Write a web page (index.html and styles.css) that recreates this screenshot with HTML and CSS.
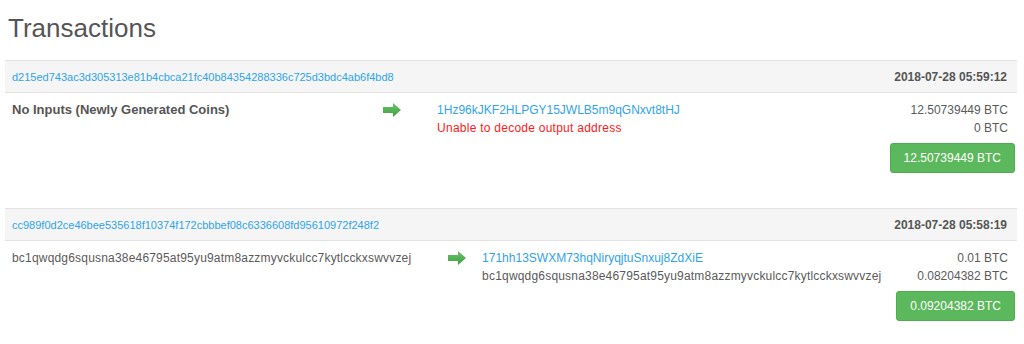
FILE: index.html
```html
<!DOCTYPE html>
<html>
<head>
<meta charset="utf-8">
<link rel="stylesheet" href="styles.css">
</head>
<body>
<div class="page">
  <h1 class="title">Transactions</h1>

  <div class="tx">
    <div class="tx-head">
      <a class="hash" href="#">d215ed743ac3d305313e81b4cbca21fc40b84354288336c725d3bdc4ab6f4bd8</a>
      <span class="time">2018-07-28 05:59:12</span>
    </div>
    <table class="tx-body">
      <tr>
        <td class="ins"><span class="coinbase">No Inputs (Newly Generated Coins)</span></td>
        <td class="arrow"><svg width="18" height="14" viewBox="0 0 18 14"><defs><linearGradient id="g1" x1="0" y1="0" x2="0" y2="1"><stop offset="0" stop-color="#6cc36c"/><stop offset="1" stop-color="#3f9e3f"/></linearGradient></defs><polygon points="0,4 10,4 10,0 18,7 10,14 10,10 0,10" fill="url(#g1)"/></svg></td>
        <td class="outs">
          <a href="#">1Hz96kJKF2HLPGY15JWLB5m9qGNxvt8tHJ</a><br>
          <span class="err">Unable to decode output address</span>
        </td>
        <td class="amts">12.50739449 BTC<br>0 BTC</td>
      </tr>
    </table>
    <div class="tx-foot"><span class="total">12.50739449 BTC</span></div>
  </div>

  <div class="tx">
    <div class="tx-head">
      <a class="hash" href="#">cc989f0d2ce46bee535618f10374f172cbbbef08c6336608fd95610972f248f2</a>
      <span class="time">2018-07-28 05:58:19</span>
    </div>
    <table class="tx-body">
      <tr>
        <td class="ins"><span class="addr">bc1qwqdg6squsna38e46795at95yu9atm8azzmyvckulcc7kytlcckxswvvzej</span></td>
        <td class="arrow"><svg width="18" height="14" viewBox="0 0 18 14"><defs><linearGradient id="g2" x1="0" y1="0" x2="0" y2="1"><stop offset="0" stop-color="#6cc36c"/><stop offset="1" stop-color="#3f9e3f"/></linearGradient></defs><polygon points="0,4 10,4 10,0 18,7 10,14 10,10 0,10" fill="url(#g2)"/></svg></td>
        <td class="outs">
          <a href="#">171hh13SWXM73hqNiryqjtuSnxuj8ZdXiE</a><br>
          <span class="addr">bc1qwqdg6squsna38e46795at95yu9atm8azzmyvckulcc7kytlcckxswvvzej</span>
        </td>
        <td class="amts">0.01 BTC<br>0.08204382 BTC</td>
      </tr>
    </table>
    <div class="tx-foot"><span class="total">0.09204382 BTC</span></div>
  </div>
</div>
</body>
</html>
```

FILE: styles.css
```css
html, body {
  margin: 0;
  padding: 0;
  background: #fff;
}
body {
  font-family: "Liberation Sans", Arial, sans-serif;
  font-size: 12px;
  line-height: 18px;
  color: #5a5a5a;
}
a {
  color: #2fa4e7;
  text-decoration: none;
}
.page {
  padding: 0 7px 0 5px;
}
.title {
  margin: 0 0 0 3px;
  padding-top: 13px;
  height: 60px;
  font-size: 26px;
  line-height: 30px;
  font-weight: normal;
  color: #555;
  box-sizing: border-box;
}
.tx {
  margin-bottom: 35px;
}
.tx-head {
  display: flex;
  justify-content: space-between;
  align-items: center;
  height: 31px;
  padding: 0 10px 0 7px;
  background: #f5f5f5;
  border-top: 1px solid #e3e3e3;
  border-bottom: 1px solid #e3e3e3;
}
.hash {
  font-size: 11px;
}
.time {
  font-weight: bold;
  font-size: 12px;
  color: #555;
}
.tx-body {
  width: 100%;
  border-collapse: collapse;
}
.tx-body td {
  vertical-align: top;
  padding: 8px 7px 0 7px;
  white-space: nowrap;
}
.tx-body td.arrow {
  padding-left: 12px;
  padding-right: 6px;
}
.tx-body td.outs {
  padding-left: 9px;
}
.addr {
  letter-spacing: 0.19px;
}
.coinbase {
  font-weight: bold;
  font-size: 13px;
  color: #555;
}
.arrow svg {
  display: block;
  margin-top: 2px;
}
.err {
  color: #ff1a1a;
  letter-spacing: 0.25px;
}
.amts {
  text-align: right;
}
.tx-body td.amts {
  padding-right: 9px;
}
.tx-foot {
  display: flex;
  justify-content: flex-end;
  padding: 6px 2px 0 0;
}
.total {
  display: inline-block;
  padding: 5px 13px;
  background: #5cb85c;
  border: 1px solid #4cae4c;
  border-radius: 3px;
  color: #fff;
  font-size: 12px;
  line-height: 18px;
}
```
